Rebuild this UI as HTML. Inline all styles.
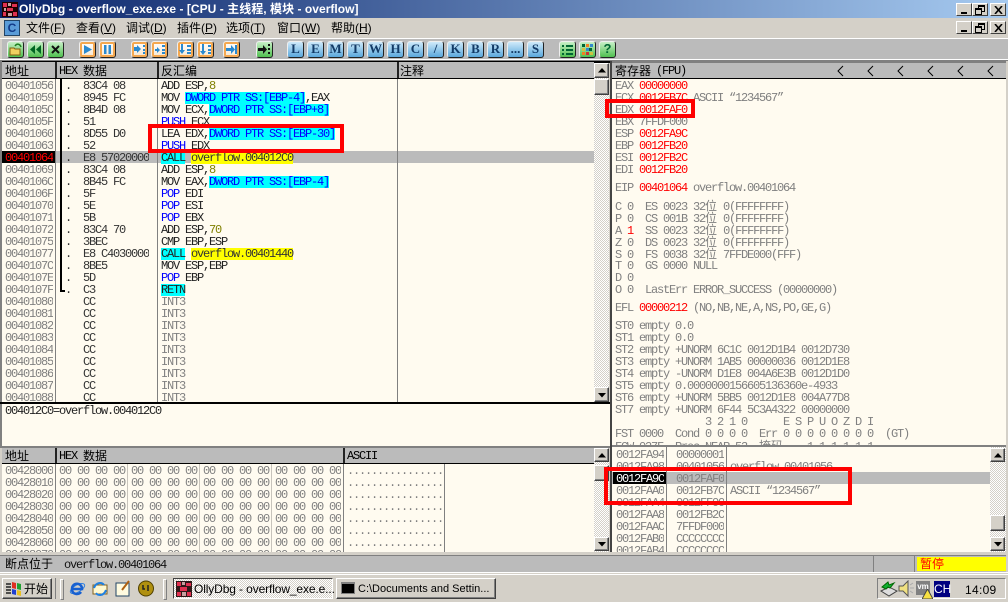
<!DOCTYPE html>
<html><head><meta charset="utf-8"><title>OllyDbg</title>
<style>
html,body{margin:0;padding:0}
body{width:1008px;height:602px;overflow:hidden;position:relative;background:#d4d0c8}
div,pre,svg{position:absolute;margin:0}
.p{font:12px/12px "Liberation Mono","Noto Sans CJK SC",monospace;letter-spacing:-1.2px;white-space:pre;color:#808080;transform:translateY(1px)}
.k{color:#000}
.z{font:12px/12px "Noto Sans CJK SC",sans-serif;letter-spacing:0;color:#000;white-space:pre}
i{font-style:normal}
.q{font:12px/12px "Noto Sans CJK SC",sans-serif;letter-spacing:0}
.r{color:#f00}.bl{color:#00f}.ol{color:#808000}
.c{background:#0ff;display:inline-block;height:12px}.cb{background:#0ff;color:#00f;display:inline-block;height:12px}
.y{background:#ff0;display:inline-block;height:12px;color:#333}
.hd{background:#bbb;height:16px}
.ln{background:#808080;width:1px}
.bx{border:4px solid #f00;box-sizing:border-box}
.sb{background-color:#fff;background-image:conic-gradient(#d4d0c8 25%,#fff 25% 50%,#d4d0c8 50% 75%,#fff 75%);background-size:2px 2px}
.ub{background:#d4d0c8;box-sizing:border-box;border:1px solid;border-color:#fff #404040 #404040 #fff;box-shadow:inset -1px -1px 0 #808080}
.b{top:41px;width:17px;height:17px;box-sizing:border-box;border-radius:3px;border:1px solid #222;border-left-color:#eee;border-top-color:#eee;text-align:center;font:bold 13px/14px "Liberation Serif",serif;color:#123a66;background:linear-gradient(#cfeafa,#5aa8dc)}
.o{background:linear-gradient(#fff,#f8e8d0);box-shadow:inset 0 0 0 2px #f4a850}
.g{background:linear-gradient(#c8f0c8,#50c050)}
.w{background:#d4d0c8;box-sizing:border-box;width:16px;height:13px;border:1px solid;border-color:#fff #404040 #404040 #fff}
.t{font:12px/18px "Liberation Sans","Noto Sans CJK SC",sans-serif;color:#000;white-space:pre}
u{text-decoration:underline}
</style></head><body>

<!-- Title -->
<div style="left:0;top:0;width:1008px;height:18px;background:linear-gradient(90deg,#0a246a,#a6caf0)"></div>
<svg style="left:2px;top:2px" width="16" height="15" viewBox="0 0 16 15"><rect width="16" height="15" fill="#200"/><path d="M1 1h4v4H1zM10 2h5v3h-5zM5 6h6v3H5zM1 10h3v4H1zM11 10h4v4h-4z" fill="#e03050"/><path d="M6 1h3v3H6zM2 6h2v3H2zM6 11h4v3H6z" fill="#c8a0a0"/></svg>
<div style="left:19px;top:0;font:bold 12px/19px 'Liberation Sans','Noto Sans CJK SC',sans-serif;color:#fff;white-space:pre;letter-spacing:.04px">OllyDbg - overflow_exe.exe - [CPU - 主线程, 模块 - overflow]</div>
<div class="w" style="left:956px;top:3px"><div style="left:4px;top:8px;width:6px;height:2px;background:#000"></div></div>
<div class="w" style="left:972px;top:3px"><div style="left:5px;top:1px;width:5px;height:4px;border:1px solid #000;border-top-width:2px"></div><div style="left:2px;top:4px;width:5px;height:4px;border:1px solid #000;border-top-width:2px;background:#d4d0c8"></div></div>
<div class="w" style="left:990px;top:3px"><svg style="left:3px;top:2px" width="9" height="8"><path d="M1 0l7 8M8 0L1 8" stroke="#000" stroke-width="1.6"/></svg></div>

<!-- Menu -->
<div style="left:4px;top:20px;width:16px;height:16px;background:#5a9cd8;border:1px solid #246;box-sizing:border-box;font:bold 12px/14px 'Liberation Sans',sans-serif;text-align:center;color:#123a88">C</div>
<div class="t" style="left:26px;top:19px">文件(<u>F</u>)</div>
<div class="t" style="left:76px;top:19px">查看(<u>V</u>)</div>
<div class="t" style="left:126px;top:19px">调试(<u>D</u>)</div>
<div class="t" style="left:177px;top:19px">插件(<u>P</u>)</div>
<div class="t" style="left:226px;top:19px">选项(<u>T</u>)</div>
<div class="t" style="left:277px;top:19px">窗口(<u>W</u>)</div>
<div class="t" style="left:331px;top:19px">帮助(<u>H</u>)</div>
<div class="w" style="left:956px;top:21px"><div style="left:4px;top:8px;width:6px;height:2px;background:#000"></div></div>
<div class="w" style="left:972px;top:21px"><div style="left:5px;top:1px;width:5px;height:4px;border:1px solid #000;border-top-width:2px"></div><div style="left:2px;top:4px;width:5px;height:4px;border:1px solid #000;border-top-width:2px;background:#d4d0c8"></div></div>
<div class="w" style="left:990px;top:21px"><svg style="left:3px;top:2px" width="9" height="8"><path d="M1 0l7 8M8 0L1 8" stroke="#000" stroke-width="1.6"/></svg></div>

<!-- Toolbar -->
<div style="left:0;top:38px;width:1008px;height:1px;background:#fff"></div>
<div style="left:2px;top:39px;width:1006px;height:20px;background:#bbb"></div>
<div style="left:0;top:59px;width:1008px;height:1px;background:#fff"></div>
<div style="left:0;top:60px;width:1008px;height:1px;background:#808080"></div>

<div class="b g" style="left:7px"><svg style="left:0;top:0" width="15" height="15"><path d="M2 6h4l1 1h5v6H2z" fill="#f0d060" stroke="#806010"/><path d="M7 4c2-3 5-2 6 1" fill="none" stroke="#208020" stroke-width="1.5"/></svg></div>
<div class="b g" style="left:27px"><svg style="left:0;top:0" width="15" height="15"><path d="M7 3v9L2 7.500zM13 3v9L8 7.500z" fill="#062"/></svg></div>
<div class="b g" style="left:47px"><svg style="left:0;top:0" width="15" height="15"><path d="M4 4l7 7M11 4l-7 7" stroke="#111" stroke-width="2"/></svg></div>
<div class="b o" style="left:79px"><svg style="left:0;top:0" width="15" height="15"><path d="M4 3l8 4.500-8 4.500z" fill="#2a8ad0"/></svg></div>
<div class="b o" style="left:99px"><svg style="left:0;top:0" width="15" height="15"><path d="M4 3h2.500v9H4zM8.500 3H11v9H8.500z" fill="#2a8ad0"/></svg></div>
<div class="b o" style="left:131px"><svg style="left:0;top:0" width="15" height="15"><path d="M2 5h3V3l4 4-4 4V9H2zM11 3h2v2h-2zM11 7h2v2h-2zM11 10h2v2h-2z" fill="#2a8ad0"/></svg></div>
<div class="b o" style="left:151px"><svg style="left:0;top:0" width="15" height="15"><path d="M3 7h2V5l3 3-3 3V9H3zM10 3h3v2h-3zM10 7h3v2h-3zM10 10h3v2h-3z" fill="#2a8ad0"/></svg></div>
<div class="b o" style="left:177px"><svg style="left:0;top:0" width="15" height="15"><path d="M3 2h2v6h2l-3 4-3-4h2zM9 3h4v2H9zM9 7h4v2H9zM9 10h4v2H9z" fill="#2a8ad0"/></svg></div>
<div class="b o" style="left:197px"><svg style="left:0;top:0" width="15" height="15"><path d="M4 2h2v7h2l-3 4-3-4h2zM10 3h3v2h-3zM10 7h3v2h-3zM10 10h3v2h-3z" fill="#2a8ad0"/></svg></div>
<div class="b o" style="left:223px"><svg style="left:0;top:0" width="15" height="15"><path d="M2 6h5V3l4 4.500L7 12V9H2zM11 3h2v9h-2z" fill="#2a8ad0"/></svg></div>
<div class="b g" style="left:256px"><svg style="left:0;top:0" width="15" height="15"><path d="M1 6h5V3l4 4.500L6 12V9H1zM11 2h2v2h-2zM11 6h2v2h-2zM11 10h2v2h-2z" fill="#111"/></svg></div>
<div class="b" style="left:287px">L</div>
<div class="b" style="left:307px">E</div>
<div class="b" style="left:327px">M</div>
<div class="b" style="left:347px">T</div>
<div class="b" style="left:367px">W</div>
<div class="b" style="left:387px">H</div>
<div class="b" style="left:407px">C</div>
<div class="b" style="left:427px">/</div>
<div class="b" style="left:447px">K</div>
<div class="b" style="left:467px">B</div>
<div class="b" style="left:487px">R</div>
<div class="b" style="left:507px">...</div>
<div class="b" style="left:527px">S</div>
<div class="b g" style="left:559px"><svg style="left:0;top:0" width="15" height="15"><path d="M2 3h2v2H2zM2 7h2v2H2zM2 11h2v2H2zM6 3h7v2H6zM6 7h7v2H6zM6 11h7v2H6z" fill="#063"/></svg></div>
<div class="b g" style="left:579px"><svg style="left:0;top:0" width="15" height="15"><path d="M2 2h3v3H2zM9 6h3v3H9z" fill="#063"/><path d="M6 2h3v3H6zM2 10h3v3H2z" fill="#f08020"/><path d="M10 2h3v3h-3zM6 6h3v3H6z" fill="#38c"/><path d="M2 6h3v3H2zM10 10h3v3h-3z" fill="#d0c040"/><path d="M6 10h3v3H6z" fill="#c33"/></svg></div>
<div class="b g" style="left:599px;font:bold 13px/14px 'Liberation Sans',sans-serif;color:#063">?</div>

<!-- Dark panel frame -->
<div style="left:0;top:61px;width:612px;height:2px;background:#000"></div>
<div style="left:0;top:61px;width:2px;height:386px;background:#808080"></div>

<!-- Disasm panel -->
<div style="left:2px;top:63px;width:592px;height:340px;background:#fffbf0"></div>
<div class="hd" style="left:2px;top:62px;width:592px"></div>
<div style="left:2px;top:78px;width:592px;height:1px;background:#000"></div>
<div style="left:55px;top:62px;width:2px;height:16px;background:#222"></div>
<div style="left:157px;top:62px;width:2px;height:16px;background:#222"></div>
<div style="left:397px;top:62px;width:2px;height:16px;background:#222"></div>
<div class="z" style="left:5px;top:65px">地址</div>
<div class="p k" style="left:59px;top:64px">HEX</div><div class="z" style="left:83px;top:65px">数据</div>
<div class="z" style="left:161px;top:65px">反汇编</div>
<div class="z" style="left:400px;top:65px">注释</div>

<div style="left:2px;top:151px;width:592px;height:12px;background:#bbb"></div>
<div style="left:2px;top:151px;width:54px;height:12px;background:#000"></div>
<div class="ln" style="left:55px;top:79px;height:324px"></div>
<div class="ln" style="left:157px;top:79px;height:324px"></div>
<div class="ln" style="left:397px;top:79px;height:324px"></div>
<div style="left:60px;top:79px;width:2px;height:213px;background:#000"></div>
<div style="left:60px;top:290px;width:5px;height:2px;background:#000"></div>

<pre class="p" style="left:5px;top:79px;height:323px;overflow:hidden">00401056
00401059
0040105C
0040105F
00401060
00401063
<span class="r">00401064</span>
00401069
0040106C
0040106F
00401070
00401071
00401072
00401075
00401077
0040107C
0040107E
0040107F
00401080
00401081
00401082
00401083
00401084
00401085
00401086
00401087
00401088</pre>
<pre class="p k" style="left:65px;top:79px;height:323px;overflow:hidden;color:#333">.  83C4 08
.  8945 FC
.  8B4D 08
.  51
.  8D55 D0
.  52
.  E8 57020000
.  83C4 08
.  8B45 FC
.  5F
.  5E
.  5B
.  83C4 70
.  3BEC
.  E8 C4030000
.  8BE5
.  5D
.  C3
   CC
   CC
   CC
   CC
   CC
   CC
   CC
   CC
   CC</pre>
<pre class="p" style="left:161px;top:79px;height:323px;overflow:hidden;color:#222">ADD ESP,<span class="ol">8</span>
MOV <span class="cb">DWORD PTR SS:[EBP-4]</span>,EAX
MOV ECX,<span class="cb">DWORD PTR SS:[EBP+8]</span>
<span class="bl">PUSH</span> ECX
LEA EDX,<span class="cb">DWORD PTR SS:[EBP-30]</span>
<span class="bl">PUSH</span> EDX
<span class="c">CALL</span> <span class="y">overflow.004012C0</span>
ADD ESP,<span class="ol">8</span>
MOV EAX,<span class="cb">DWORD PTR SS:[EBP-4]</span>
<span class="bl">POP</span> EDI
<span class="bl">POP</span> ESI
<span class="bl">POP</span> EBX
ADD ESP,<span class="ol">70</span>
CMP EBP,ESP
<span class="c">CALL</span> <span class="y">overflow.00401440</span>
MOV ESP,EBP
<span class="bl">POP</span> EBP
<span class="c">RETN</span>
<span style="color:#808080">INT3
INT3
INT3
INT3
INT3
INT3
INT3
INT3
INT3</span></pre>

<!-- Disasm scrollbar -->
<div class="sb" style="left:594px;top:63px;width:15px;height:340px"></div>
<div class="ub" style="left:594px;top:63px;width:15px;height:15px"><svg style="left:3px;top:4px" width="8" height="5"><path d="M4 0l4 4.500H0z" fill="#000"/></svg></div>
<div class="ub" style="left:594px;top:79px;width:15px;height:16px"></div>
<div class="ub" style="left:594px;top:387px;width:15px;height:15px"><svg style="left:3px;top:5px" width="8" height="5"><path d="M0 0h8L4 4.500z" fill="#000"/></svg></div>

<div style="left:0;top:402px;width:610px;height:2px;background:#000"></div>

<!-- Info -->
<div style="left:2px;top:404px;width:608px;height:42px;background:#fffbf0"></div>
<pre class="p" style="left:5px;top:404px;color:#222">004012C0=overflow.004012C0</pre>
<div style="left:0;top:446px;width:610px;height:2px;background:#808080"></div>

<!-- Hex panel -->
<div style="left:2px;top:448px;width:592px;height:104px;background:#fffbf0"></div>
<div class="hd" style="left:2px;top:448px;width:592px;height:15px"></div>
<div style="left:2px;top:463px;width:592px;height:1px;background:#000"></div>
<div style="left:55px;top:448px;width:2px;height:15px;background:#222"></div>
<div style="left:343px;top:448px;width:2px;height:15px;background:#222"></div>
<div class="z" style="left:5px;top:450px">地址</div>
<div class="p k" style="left:59px;top:449px">HEX</div><div class="z" style="left:83px;top:450px">数据</div>
<div class="p k" style="left:347px;top:449px">ASCII</div>
<div class="ln" style="left:55px;top:464px;height:88px"></div>
<div style="left:127px;top:464px;width:1px;height:88px;background:#c8c4bc"></div>
<div style="left:199px;top:464px;width:1px;height:88px;background:#c8c4bc"></div>
<div style="left:271px;top:464px;width:1px;height:88px;background:#c8c4bc"></div>
<div class="ln" style="left:343px;top:464px;height:88px"></div>
<div class="ln" style="left:444px;top:464px;height:88px"></div>
<pre class="p" style="left:5px;top:464px;height:88px;overflow:hidden">00428000
00428010
00428020
00428030
00428040
00428050
00428060
00428070</pre>
<pre class="p" style="left:59px;top:464px;height:88px;overflow:hidden">00 00 00 00 00 00 00 00 00 00 00 00 00 00 00 00
00 00 00 00 00 00 00 00 00 00 00 00 00 00 00 00
00 00 00 00 00 00 00 00 00 00 00 00 00 00 00 00
00 00 00 00 00 00 00 00 00 00 00 00 00 00 00 00
00 00 00 00 00 00 00 00 00 00 00 00 00 00 00 00
00 00 00 00 00 00 00 00 00 00 00 00 00 00 00 00
00 00 00 00 00 00 00 00 00 00 00 00 00 00 00 00
00 00 00 00 00 00 00 00 00 00 00 00 00 00 00 00</pre>
<pre class="p" style="left:347px;top:464px;height:88px;overflow:hidden">................
................
................
................
................
................
................
................</pre>
<div class="sb" style="left:594px;top:448px;width:15px;height:104px"></div>
<div class="ub" style="left:594px;top:448px;width:15px;height:14px"><svg style="left:3px;top:4px" width="8" height="5"><path d="M4 0l4 4.500H0z" fill="#000"/></svg></div>
<div class="ub" style="left:594px;top:465px;width:15px;height:16px"></div>
<div class="ub" style="left:594px;top:537px;width:15px;height:14px"><svg style="left:3px;top:4px" width="8" height="5"><path d="M0 0h8L4 4.500z" fill="#000"/></svg></div>

<!-- Right divider -->
<div style="left:610px;top:61px;width:2px;height:491px;background:#444"></div>

<!-- Register panel -->
<div style="left:612px;top:62px;width:394px;height:383px;background:#fffbf0;overflow:hidden"></div>
<div class="hd" style="left:612px;top:63px;width:394px;height:15px"></div>
<div style="left:612px;top:78px;width:394px;height:1px;background:#000"></div>
<div style="left:612px;top:61px;width:394px;height:2px;background:#808080"></div>
<div class="z" style="left:615px;top:65px">寄存器</div><div class="p k" style="left:656px;top:64px">(FPU)</div>
<svg style="left:830px;top:64px" width="170" height="14"><path d="M13 2L8 7l5 5M43 2l-5 5 5 5M73 2l-5 5 5 5M103 2l-5 5 5 5M133 2l-5 5 5 5M163 2l-5 5 5 5" fill="none" stroke="#000"/></svg>

<div style="left:612px;top:79px;width:394px;height:366px;overflow:hidden">
<div class="p" style="left:3px;top:0">EAX <span class="r">00000000</span></div>
<div class="p" style="left:3px;top:12px">ECX <span class="r">0012FB7C</span> ASCII “1234567”</div>
<div class="p" style="left:3px;top:24px">EDX <span class="r">0012FAF0</span></div>
<div class="p" style="left:3px;top:36px">EBX 7FFDF000</div>
<div class="p" style="left:3px;top:48px">ESP <span class="r">0012FA9C</span></div>
<div class="p" style="left:3px;top:60px">EBP <span class="r">0012FB20</span></div>
<div class="p" style="left:3px;top:72px">ESI <span class="r">0012FB2C</span></div>
<div class="p" style="left:3px;top:84px">EDI <span class="r">0012FB20</span></div>
<div class="p" style="left:3px;top:102px">EIP <span class="r">00401064</span> overflow.00401064</div>
<div class="p" style="left:3px;top:120px">C 0  ES 0023 32<i class="q">位</i> 0(FFFFFFFF)</div>
<div class="p" style="left:3px;top:132px">P 0  CS 001B 32<i class="q">位</i> 0(FFFFFFFF)</div>
<div class="p" style="left:3px;top:144px">A <span class="r">1</span>  SS 0023 32<i class="q">位</i> 0(FFFFFFFF)</div>
<div class="p" style="left:3px;top:156px">Z 0  DS 0023 32<i class="q">位</i> 0(FFFFFFFF)</div>
<div class="p" style="left:3px;top:168px">S 0  FS 0038 32<i class="q">位</i> 7FFDE000(FFF)</div>
<div class="p" style="left:3px;top:180px">T 0  GS 0000 NULL</div>
<div class="p" style="left:3px;top:192px">D 0</div>
<div class="p" style="left:3px;top:204px">O 0  LastErr ERROR_SUCCESS (00000000)</div>
<div class="p" style="left:3px;top:222px">EFL <span class="r">00000212</span> (NO,NB,NE,A,NS,PO,GE,G)</div>
<div class="p" style="left:3px;top:240px">ST0 empty 0.0</div>
<div class="p" style="left:3px;top:252px">ST1 empty 0.0</div>
<div class="p" style="left:3px;top:264px">ST2 empty +UNORM 6C1C 0012D1B4 0012D730</div>
<div class="p" style="left:3px;top:276px">ST3 empty +UNORM 1AB5 00000036 0012D1E8</div>
<div class="p" style="left:3px;top:288px">ST4 empty -UNORM D1E8 004A6E3B 0012D1D0</div>
<div class="p" style="left:3px;top:300px">ST5 empty 0.0000000156605136360e-4933</div>
<div class="p" style="left:3px;top:312px">ST6 empty +UNORM 5BB5 0012D1E8 004A77D8</div>
<div class="p" style="left:3px;top:324px">ST7 empty +UNORM 6F44 5C3A4322 00000000</div>
<div class="p" style="left:3px;top:336px">               3 2 1 0      E S P U O Z D I</div>
<div class="p" style="left:3px;top:348px">FST 0000  Cond 0 0 0 0  Err 0 0 0 0 0 0 0 0  (GT)</div>
<div class="p" style="left:3px;top:360px">FCW 027F  Prec NEAR,53  <i class="q" style="color:#808080">掩码</i>    1 1 1 1 1 1</div>
</div>

<div style="left:612px;top:445px;width:394px;height:2px;background:#808080"></div>

<!-- Stack panel -->
<div style="left:612px;top:447px;width:378px;height:105px;background:#fffbf0"></div>
<div style="left:612px;top:472px;width:378px;height:12px;background:#bbb"></div>
<div style="left:613px;top:472px;width:53px;height:12px;background:#000"></div>
<div class="ln" style="left:666px;top:447px;height:105px"></div>
<div class="ln" style="left:726px;top:447px;height:105px"></div>
<pre class="p" style="left:616px;top:448px;height:104px;overflow:hidden">0012FA94
0012FA98
<span style="color:#fff">0012FA9C</span>
0012FAA0
0012FAA4
0012FAA8
0012FAAC
0012FAB0
0012FAB4</pre>
<pre class="p" style="left:676px;top:448px;height:104px;overflow:hidden">00000001
00401056
0012FAF0
0012FB7C
0012FF00
0012FB2C
7FFDF000
CCCCCCCC
CCCCCCCC</pre>
<div class="p" style="left:730px;top:460px">overflow.00401056</div>
<div class="p" style="left:730px;top:484px">ASCII “1234567”</div>
<div class="sb" style="left:990px;top:447px;width:16px;height:105px"></div>
<div class="ub" style="left:990px;top:448px;width:15px;height:14px"><svg style="left:3px;top:4px" width="8" height="5"><path d="M4 0l4 4.500H0z" fill="#000"/></svg></div>
<div class="ub" style="left:990px;top:515px;width:15px;height:16px"></div>
<div class="ub" style="left:990px;top:537px;width:15px;height:14px"><svg style="left:3px;top:4px" width="8" height="5"><path d="M0 0h8L4 4.500z" fill="#000"/></svg></div>

<!-- Red boxes -->
<div class="bx" style="left:148px;top:124px;width:196px;height:29px"></div>
<div class="bx" style="left:605px;top:99px;width:90px;height:19px"></div>
<div class="bx" style="left:604px;top:467px;width:248px;height:38px"></div>

<!-- Status -->
<div style="left:0;top:552px;width:1008px;height:3px;background:#d4d0c8"></div>
<div style="left:0;top:555px;width:1006px;height:18px;background:#bbb"></div>
<div style="left:0;top:555px;width:1006px;height:1px;background:#808080"></div>
<div style="left:0;top:572px;width:1008px;height:1px;background:#fff"></div>
<div style="left:873px;top:556px;width:1px;height:16px;background:#808080"></div>
<div style="left:914px;top:556px;width:1px;height:16px;background:#808080"></div>
<div class="z" style="left:5px;top:558px">断点位于</div>
<div class="p" style="left:64px;top:558px;color:#111">overflow.00401064</div>
<div style="left:917px;top:557px;width:89px;height:14px;background:#ff0"></div>
<div class="z" style="left:920px;top:558px;color:#f00">暂停</div>

<!-- Taskbar -->
<div style="left:0;top:573px;width:1008px;height:29px;background:#d4d0c8"></div>
<div style="left:0;top:574px;width:1008px;height:1px;background:#fff"></div>
<div style="left:2px;top:578px;width:50px;height:21px;box-sizing:border-box;border:1px solid;border-color:#fff #404040 #404040 #fff;box-shadow:inset -1px -1px 0 #808080"></div>
<svg style="left:5px;top:581px" width="18" height="15"><path d="M7 1l4 1v6l-4-1z" fill="#e03020"/><path d="M12 2l4 1v6l-4-1z" fill="#20a030"/><path d="M7 8l4 1v5l-4-1z" fill="#2040d0"/><path d="M12 9l4 1v5l-4-1z" fill="#e8c020"/><path d="M1 3h5M1 6h5M1 9h5M1 12h5" stroke="#222" stroke-width="1.500"/></svg>
<div class="t" style="left:24px;top:580px">开始</div>
<div style="left:55px;top:578px;width:1px;height:21px;background:#808080"></div>
<div style="left:60px;top:579px;width:2px;height:19px;border:1px solid;border-color:#fff #808080 #808080 #fff"></div>
<svg style="left:68px;top:579px" width="19" height="19"><ellipse cx="9.500" cy="9.500" rx="8" ry="3.500" fill="none" stroke="#3080e0" transform="rotate(-30 9.500 9.500)"/><path d="M4 10h10c0-7-10-7-10 0 0 6 7 6 9 3" fill="none" stroke="#1860d0" stroke-width="2.500"/></svg>
<svg style="left:91px;top:580px" width="18" height="17"><rect x="2" y="5" width="14" height="9" fill="#fff8d0" stroke="#806020"/><path d="M3 8c2-6 8-6 10-3M15 10c-2 6-8 6-10 3" fill="none" stroke="#2080e0" stroke-width="2"/></svg>
<svg style="left:114px;top:579px" width="18" height="18"><rect x="2" y="4" width="13" height="13" fill="#fffbe0" stroke="#246"/><path d="M8 11L15 2" stroke="#b06010" stroke-width="2"/></svg>
<svg style="left:137px;top:580px" width="18" height="17"><circle cx="9" cy="8.500" r="7.500" fill="#b09010" stroke="#504000"/><path d="M6 5v4h2M11 5v6" stroke="#222" stroke-width="1.500" fill="none"/></svg>
<div style="left:163px;top:579px;width:2px;height:19px;border:1px solid;border-color:#fff #808080 #808080 #fff"></div>
<div class="sb" style="left:173px;top:578px;width:160px;height:21px;box-sizing:border-box;border:1px solid;border-color:#404040 #fff #fff #404040"></div>
<svg style="left:176px;top:581px" width="16" height="16"><rect width="16" height="16" fill="#301818"/><path d="M1 1h4v4H1zM10 2h5v3h-5zM4 6h7v4H4zM1 11h4v4H1zM11 11h4v4h-4z" fill="#e03050"/><path d="M6 1h3v3H6zM6 11h4v4H6z" fill="#c8a0a0"/></svg>
<div class="t" style="left:194px;top:580px;letter-spacing:-.12px">OllyDbg - overflow_exe.e...</div>
<div style="left:336px;top:578px;width:160px;height:21px;box-sizing:border-box;border:1px solid;border-color:#fff #404040 #404040 #fff;box-shadow:inset -1px -1px 0 #808080"></div>
<div style="left:341px;top:582px;width:14px;height:12px;background:#000;border:1px solid #808080;box-sizing:border-box;border-top-width:2px"></div>
<div class="t" style="left:358px;top:580px;font-size:11px">C:\Documents and Settin...</div>

<!-- Tray -->
<div style="left:877px;top:578px;width:129px;height:21px;box-sizing:border-box;border:1px solid;border-color:#808080 #fff #fff #808080"></div>
<svg style="left:880px;top:580px" width="18" height="17"><path d="M1 11l8-4 8 4-8 5z" fill="#ddd" stroke="#444"/><path d="M2 7l6-5 1 3 5-2-4 5-2-1-2 2z" fill="#10b030" stroke="#060"/></svg>
<svg style="left:898px;top:580px" width="18" height="17"><path d="M1 6h4l5-5v15l-5-5H1z" fill="#f0e080" stroke="#555"/><path d="M12 5l3-2M12 8h4M12 11l3 2" stroke="#aaa"/></svg>
<div style="left:916px;top:581px;width:14px;height:14px;background:#808080;font:bold 8px/12px 'Liberation Sans',sans-serif;color:#fff;text-align:center">vm</div>
<svg style="left:922px;top:589px" width="11" height="10"><path d="M5.500 0L11 10H0z" fill="#f8e040" stroke="#444"/></svg>
<div style="left:934px;top:581px;width:16px;height:16px;background:#000080;color:#fff;font:12px/16px 'Liberation Sans',sans-serif;text-align:center">CH</div>
<div class="t" style="left:965px;top:581px;letter-spacing:.3px">14:09</div>

</body></html>
